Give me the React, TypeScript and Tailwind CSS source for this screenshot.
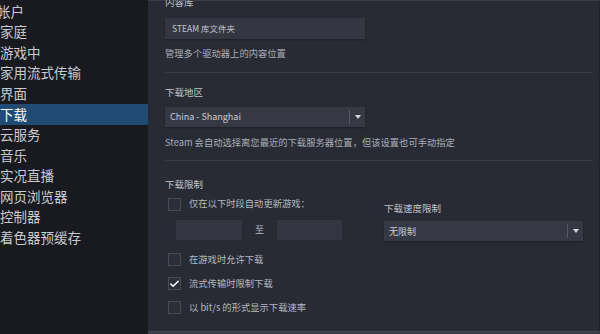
import { Check } from 'lucide-react';

const font = { fontFamily: '"Noto Sans CJK SC", "Noto Sans", sans-serif' };

const navItems = [
  '帐户',
  '家庭',
  '游戏中',
  '家用流式传输',
  '界面',
  '下载',
  '云服务',
  '音乐',
  '实况直播',
  '网页浏览器',
  '控制器',
  '着色器预缓存',
];

const Checkbox = ({ checked, label }: { checked?: boolean; label: string }) => (
  <div className="flex items-center h-[13px]">
    <div className="w-[13px] h-[13px] border border-[#464a54] bg-[#2b2e37] flex items-center justify-center ml-[3px]">
      {checked && <Check size={12} strokeWidth={3.5} className="text-white" />}
    </div>
    <span className="ml-[8px] text-[9.3px] text-[#b4b8c0] leading-none">{label}</span>
  </div>
);

const Select = ({ value, width }: { value: string; width: string }) => (
  <div className={`${width} h-[20px] bg-[#363944] flex items-center shadow-[0_1px_2px_rgba(0,0,0,0.3)]`}>
    <span className="flex-1 pl-[5px] text-[9px] text-[#c8ccd2] leading-none">{value}</span>
    <div className="w-px h-[14px] bg-[#555964]" />
    <div className="w-[15px] flex items-center justify-center">
      {/* small filled caret */}
      <div className="w-0 h-0 border-l-[3px] border-r-[3px] border-t-[4px] border-l-transparent border-r-transparent border-t-[#d4d7dc]" />
    </div>
  </div>
);

export default function App() {
  return (
    <div className="w-[600px] h-[334px] flex overflow-hidden bg-[#282b34]" style={font}>
      {/* Sidebar */}
      <div className="w-[148px] h-full bg-[#191a1f] pt-[1px] shrink-0">
        {navItems.map((item) => (
          <div
            key={item}
            className={`h-[20.6px] flex items-center text-[13.5px] leading-none ${
              item === '下载' ? 'bg-[#1f4b74] text-white' : 'text-[#c8cacf]'
            }`}
          >
            <span className={item === '帐户' ? '-ml-[3px]' : ''}>{item}</span>
          </div>
        ))}
      </div>

      {/* Content */}
      <div className="flex-1 h-full flex flex-col border-t border-[#3a3d46]">
        <div className="flex-1 flex border-r border-[#1f2128]">
          <div className="flex-1 pl-[17px] pr-[4px]">
            <div className="text-[9.5px] text-[#b8bcc4] leading-none -mt-[3px] h-[8px]">内容库</div>
            <div className="w-[200px] h-[21px] mt-[12px] bg-[#343741] flex items-center pl-[7px] text-[8.5px] text-[#c0c4ca] leading-none shadow-[0_1px_2px_rgba(0,0,0,0.3)]">
              STEAM 库文件夹
            </div>
            <div className="mt-[10px] text-[9.3px] text-[#a9adb5] leading-none">管理多个驱动器上的内容位置</div>
            <div className="mt-[14px] h-px bg-[#3a3d47] mr-[2px]" />

            <div className="mt-[15px] text-[9.5px] text-[#c0c4ca] leading-none">下载地区</div>
            <div className="mt-[9px]">
              <Select value="China - Shanghai" width="w-[200px]" />
            </div>
            <div className="mt-[11px] text-[9.3px] text-[#a9adb5] leading-none whitespace-nowrap">
              Steam 会自动选择离您最近的下载服务器位置，但该设置也可手动指定
            </div>
            <div className="mt-[13px] h-px bg-[#3a3d47] mr-[2px]" />

            <div className="mt-[19px] text-[9.5px] text-[#c0c4ca] leading-none">下载限制</div>
            <div className="flex mt-[8px]">
              <div className="w-[219px]">
                <Checkbox label="仅在以下时段自动更新游戏：" />
                <div className="flex items-center mt-[9px] ml-[11px]">
                  <div className="w-[66px] h-[20px] bg-[#343741]" />
                  <span className="w-[35px] text-center text-[9px] text-[#b4b8c0]">至</span>
                  <div className="w-[65px] h-[20px] bg-[#343741]" />
                </div>
              </div>
              <div>
                <div className="mt-[6px] text-[9.5px] text-[#c0c4ca] leading-none">下载速度限制</div>
                <div className="mt-[8px]">
                  <Select value="无限制" width="w-[199px]" />
                </div>
              </div>
            </div>
            <div className="mt-[12px] flex flex-col gap-[11px]">
              <Checkbox label="在游戏时允许下载" />
              <Checkbox checked label="流式传输时限制下载" />
              <Checkbox label="以 bit/s 的形式显示下载速率" />
            </div>
          </div>
        </div>
        <div className="h-[3px] bg-[#3b3e48] border-t border-[#42464f]" />
      </div>
    </div>
  );
}
